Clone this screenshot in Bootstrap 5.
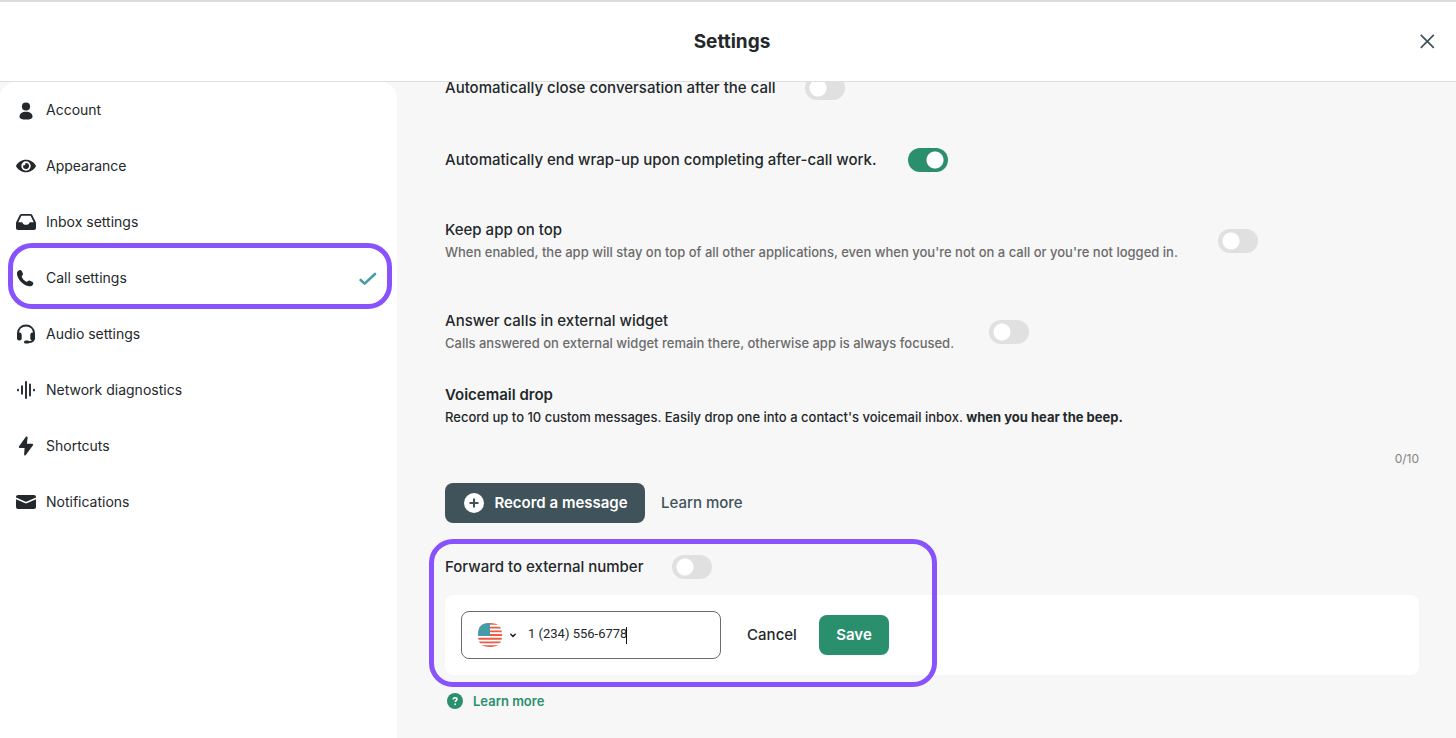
<!DOCTYPE html>
<html lang="en">
<head>
<meta charset="utf-8">
<meta name="viewport" content="width=device-width, initial-scale=1">
<title>Settings</title>
<link href="https://cdn.jsdelivr.net/npm/bootstrap@5.3.0/dist/css/bootstrap.min.css" rel="stylesheet">
<style>
:root{--ink:#23282b;--slate:#40525a;--green:#2a8f6d;--ring:#8852fd;--page:#f7f7f7}
body{font-family:"Inter","Liberation Sans",sans-serif;font-size:15px;line-height:22px;color:var(--ink);background:var(--page)}
.app-header{height:82px;flex:none;border-top:2px solid #dcdcdc;border-bottom:1px solid #dfdfdf;background:#fff}
.app-header h1{font-size:19px;line-height:24px;font-weight:700;padding-left:32px}
.close-btn{color:var(--slate);width:24px;height:24px}
.side{width:397px;flex:none;border-radius:16px 16px 0 0}
.side .nav-link{height:56px;padding:0 20px 0 16px;gap:10px;font-size:14px;line-height:20px;color:var(--ink)}
.side svg{flex:none}
.side .current{color:#459ea6}
.ring{position:absolute;border:5px solid var(--ring);border-radius:24px;pointer-events:none}
.ring-nav{inset:-7px 5px -3px 8px}
.ring-forward{left:-16px;top:-16px;bottom:-12px;width:508px}
.content{overflow:hidden;padding:0 37px 24px 48px}
.scrolled{margin-top:-6px}
.setting{display:flex;align-items:center;gap:24px;margin-bottom:47px;font-weight:500}
.label-sm{min-width:203px}.label-md{min-width:336px}.label-lg{min-width:439px}.label-xl{min-width:520px}.label-xxl{min-width:749px}
.hint{font-size:13px;line-height:22px;font-weight:500}
.hint-muted{color:#6b6b6b}
.form-check-input.toggle{width:40px;height:24px;margin:0;flex:none;border:0;border-radius:12px;background-color:#e0e0e0;background-image:radial-gradient(circle,#fff 8px,transparent 9px);background-size:24px 24px;background-position:1px center;background-repeat:no-repeat}
.form-check-input.toggle:checked{background-color:var(--green);background-image:radial-gradient(circle,#fff 8px,transparent 9px);background-position:15px center}
.voicemail{margin-top:30px}
.voicemail h2{font-size:15px;line-height:22px;font-weight:600}
.counter{font-size:12px;line-height:20px;color:#828282;margin:21px 0 14px}
.btn-box{height:40px;border:0;border-radius:8px;color:#fff;font-size:15px;font-weight:600;line-height:22px;padding:0 16px}
.btn-slate{background:var(--slate)}.btn-slate:hover{background:#33434a;color:#fff}
.btn-green{background:var(--green);width:70px}.btn-green:hover{background:#237a5d;color:#fff}
.btn-record{width:200px}
.link-slate{color:var(--slate);font-weight:500}
.btn-cancel{width:98px;height:40px;border:0;padding:0 0 0 4px;font-size:15px;font-weight:500;color:var(--ink)}
.forward{margin-top:32px}
.number-card{border-radius:8px;padding:16px}
.phone-box{width:260px;height:48px;border:1px solid #6b6b6b;border-radius:8px;padding:0 8px 0 16px}
.phone-box input{font-family:"Roboto","Liberation Sans",sans-serif;font-size:13px;line-height:20px;color:var(--ink);padding:0 0 2px;min-width:0;outline:0}
.caret{position:absolute;left:164px;top:15px;width:1px;height:17px;background:#111}
.help-link{color:var(--green);font-size:13px;font-weight:600;line-height:24px;gap:10px;margin-top:14px;padding-left:2px}
</style>
</head>
<body>
<div class="d-flex flex-column vh-100 overflow-hidden">
  <header class="app-header d-flex align-items-center px-3">
    <h1 class="flex-grow-1 text-center m-0">Settings</h1>
    <button type="button" class="btn close-btn border-0 p-0 d-flex align-items-center justify-content-center" aria-label="Close">
      <svg width="16" height="16" viewBox="0 0 16 16" fill="none" stroke="currentColor" stroke-width="1.700"><path d="M.8.8l13 13M13.800.8l-13 13"/></svg>
    </button>
  </header>
  <div class="d-flex flex-grow-1 overflow-hidden">
    <nav class="side bg-white" aria-label="Settings sections">
      <ul class="nav flex-column">
        <li><a class="nav-link d-flex align-items-center" href="#account">
          <svg width="20" height="20" viewBox="0 0 20 20" fill="currentColor"><circle cx="10" cy="6.500" r="4.100"/><path d="M3.500 16.700c0-3.300 2.700-5 6.500-5s6.500 1.700 6.500 5c0 1.900-2.600 2.800-6.500 2.800s-6.500-.9-6.500-2.800z"/></svg>
          <span>Account</span></a></li>
        <li><a class="nav-link d-flex align-items-center" href="#appearance">
          <svg width="20" height="20" viewBox="0 0 20 20"><path fill="currentColor" d="M10 3.800c4.500 0 8 2.600 9.700 5.500.3.500.3.900 0 1.400-1.700 2.900-5.200 5.500-9.700 5.500S2 13.600.3 10.700c-.3-.5-.3-.9 0-1.400C2 6.400 5.500 3.800 10 3.800z"/><circle cx="10" cy="10" r="4.700" fill="#fff"/><path fill="currentColor" d="M10 7a3 3 0 1 1-3 3c0-.3 0-.5.100-.8a1.600 1.600 0 0 0 2.200-2.100c.2-.1.500-.1.700-.1z"/></svg>
          <span>Appearance</span></a></li>
        <li><a class="nav-link d-flex align-items-center" href="#inbox">
          <svg width="20" height="20" viewBox="0 0 20 20"><path fill="currentColor" fill-rule="evenodd" d="M5.600 2h8.800c.9 0 1.600.4 2 1.200L19.700 10c.2.400.3.800.3 1.200V16c0 1.100-.9 2-2 2H2c-1.100 0-2-.9-2-2v-4.800c0-.4.100-.8.300-1.200L3.600 3.200C4 2.400 4.700 2 5.600 2zM5.400 3.800L2.300 10.300h3c.9 0 1.300.5 1.600 1.100.5.900 1.500 1.300 3.100 1.300s2.600-.4 3.100-1.300c.3-.6.700-1.100 1.600-1.100h3L14.600 3.800z"/></svg>
          <span>Inbox settings</span></a></li>
        <li class="position-relative"><a class="nav-link d-flex align-items-center" href="#call" aria-current="page">
          <svg width="20" height="20" viewBox="0 0 20 20" fill="currentColor"><path d="M2.300 2.700C3.600 1.800 5 1.900 5.700 3l1.100 2.300c.4.900.1 1.500-.5 2.100-.7.700-.7 1.300-.3 2.100.7 1.500 2 2.900 3.800 3.900.9.500 1.500.3 2.100-.3.600-.7 1.300-.9 2.200-.4l2.400 1.300c1.100.7 1.100 1.700.2 3-.9 1.200-2.700 1.500-4.700 1C6.800 16.700 2.400 12 1.200 7.200.7 5.200 1.100 3.600 2.300 2.700z"/></svg>
          <span class="flex-grow-1">Call settings</span>
          <svg class="current" width="20" height="20" viewBox="0 0 20 20" fill="none" stroke="currentColor" stroke-width="2.600" stroke-linecap="round" stroke-linejoin="round"><path d="M3.600 12l4 3.600L18 6"/></svg></a>
          <span class="ring ring-nav"></span></li>
        <li><a class="nav-link d-flex align-items-center" href="#audio">
          <svg width="20" height="20" viewBox="0 0 20 20"><path fill="none" stroke="currentColor" stroke-width="1.800" d="M2 11V9a8 7.500 0 0 1 16 0v4.500c0 3-2 4.700-5.500 4.700"/><rect x="1" y="8.500" width="4.700" height="8" rx="2.200" fill="currentColor"/><rect x="14.300" y="8.500" width="4.700" height="8" rx="2.200" fill="currentColor"/><rect x="8" y="16.600" width="5.500" height="3" rx="1.500" fill="currentColor"/></svg>
          <span>Audio settings</span></a></li>
        <li><a class="nav-link d-flex align-items-center" href="#network">
          <svg width="20" height="20" viewBox="0 0 20 20" fill="none" stroke="currentColor" stroke-width="1.900" stroke-linecap="round"><path d="M2 9.600v.8M6 6.300v7.400M10 2v16M14 4.500v11M18 9.600v.8"/></svg>
          <span>Network diagnostics</span></a></li>
        <li><a class="nav-link d-flex align-items-center" href="#shortcuts">
          <svg width="20" height="20" viewBox="0 0 20 20" fill="currentColor"><path d="M9.700 1c.8-.9 1.900-.5 1.900.6l-.7 6.100h5c1.200 0 1.600.9.9 1.800l-7 9.500c-.7.900-1.700.5-1.700-.5l.5-6.500H3.900c-1 0-1.400-.9-.8-1.700z"/></svg>
          <span>Shortcuts</span></a></li>
        <li><a class="nav-link d-flex align-items-center" href="#notifications">
          <svg width="20" height="20" viewBox="0 0 20 20" fill="currentColor"><path d="M0 5c0-1.100.9-2 2-2h16c1.100 0 2 .9 2 2v.4l-9.100 4.100c-.6.300-1.200.3-1.800 0L0 5.400z"/><path d="M0 7.200l8.700 3.900c.9.400 1.700.4 2.600 0L20 7.200V15c0 1.100-.9 2-2 2H2c-1.100 0-2-.9-2-2z"/></svg>
          <span>Notifications</span></a></li>
      </ul>
    </nav>
    <main class="content flex-grow-1">
      <div class="scrolled">
        <div class="setting mb-5">
          <label class="label-md" for="autoClose">Automatically close conversation after the call</label>
          <input class="form-check-input toggle" type="checkbox" role="switch" id="autoClose">
        </div>
        <div class="setting">
          <label class="label-lg" for="autoEnd">Automatically end wrap-up upon completing after-call work.</label>
          <input class="form-check-input toggle" type="checkbox" role="switch" id="autoEnd" checked>
        </div>
        <div class="setting">
          <label class="label-xxl" for="onTop">Keep app on top<span class="hint hint-muted d-block">When enabled, the app will stay on top of all other applications, even when you're not on a call or you're not logged in.</span></label>
          <input class="form-check-input toggle" type="checkbox" role="switch" id="onTop">
        </div>
        <div class="setting mb-0">
          <label class="label-xl" for="widget">Answer calls in external widget<span class="hint hint-muted d-block">Calls answered on external widget remain there, otherwise app is always focused.</span></label>
          <input class="form-check-input toggle" type="checkbox" role="switch" id="widget">
        </div>
        <section class="voicemail">
          <h2 class="m-0">Voicemail drop</h2>
          <p class="hint m-0">Record up to 10 custom messages. Easily drop one into a contact's voicemail inbox. <strong>when you hear the beep.</strong></p>
          <div class="counter text-end">0/10</div>
          <div class="d-flex align-items-center gap-3">
            <button type="button" class="btn btn-box btn-slate btn-record d-flex align-items-center justify-content-center gap-2">
              <svg width="24" height="24" viewBox="0 0 24 24"><circle cx="12" cy="12" r="10" fill="#fff"/><path d="M12 7.500v9M7.500 12h9" stroke="#40525a" stroke-width="2" fill="none"/></svg>
              Record a message</button>
            <a class="link-slate text-decoration-none" href="#voicemail-help">Learn more</a>
          </div>
        </section>
        <section class="forward position-relative">
          <div class="setting mb-3">
            <label class="label-sm" for="forwardCalls">Forward to external number</label>
            <input class="form-check-input toggle" type="checkbox" role="switch" id="forwardCalls">
          </div>
          <form class="number-card bg-white d-flex align-items-center">
            <div class="phone-box position-relative d-flex align-items-center">
              <button type="button" class="btn border-0 p-0 d-flex align-items-center" aria-label="Country: United States">
                <svg width="24" height="24" viewBox="0 0 24 24"><defs><clipPath id="flagShape"><path d="M12 0c8.500 0 12 3.500 12 12s-3.500 12-12 12S0 20.500 0 12 3.500 0 12 0z"/></clipPath></defs><g clip-path="url(#flagShape)"><path fill="#fff" d="M0 0h24v24H0z"/><path fill="#ee5a45" d="M0 0h24v1.800H0zM0 3.700h24v1.900H0zM0 7.400h24v1.900H0zM0 11.100h24v1.900H0zM0 14.800h24v1.900H0zM0 18.500h24v1.800H0zM0 22.200h24V24H0z"/><path fill="#469ba8" d="M0 0h12v13H0z"/></g></svg>
                <svg class="ms-2" width="6" height="5" viewBox="0 0 6 5" fill="none" stroke="#222" stroke-width="1.500" stroke-linecap="round" stroke-linejoin="round"><path d="M.8 1.200L3 3.500l2.200-2.300"/></svg>
              </button>
              <input class="border-0 bg-transparent flex-grow-1 ms-2 ps-1" type="tel" aria-label="Phone number" value="1 (234) 556-6778">
              <span class="caret"></span>
            </div>
            <button type="button" class="btn btn-cancel">Cancel</button>
            <button type="submit" class="btn btn-box btn-green">Save</button>
          </form>
          <span class="ring ring-forward"></span>
        </section>
        <a class="help-link d-inline-flex align-items-center text-decoration-none" href="#forward-help">
          <svg width="16" height="16" viewBox="0 0 16 16"><circle cx="8" cy="8" r="8" fill="currentColor"/><path d="M6.200 6.600c0-1.200.8-1.900 1.900-1.900 1.200 0 1.900.7 1.900 1.600 0 1.300-1.800 1.400-1.800 2.800" fill="none" stroke="#fff" stroke-width="1.500"/><circle cx="8.200" cy="11.200" r=".95" fill="#fff"/></svg>
          Learn more</a>
      </div>
    </main>
  </div>
</div>
<script src="https://cdn.jsdelivr.net/npm/bootstrap@5.3.0/dist/js/bootstrap.bundle.min.js"></script>
</body>
</html>
